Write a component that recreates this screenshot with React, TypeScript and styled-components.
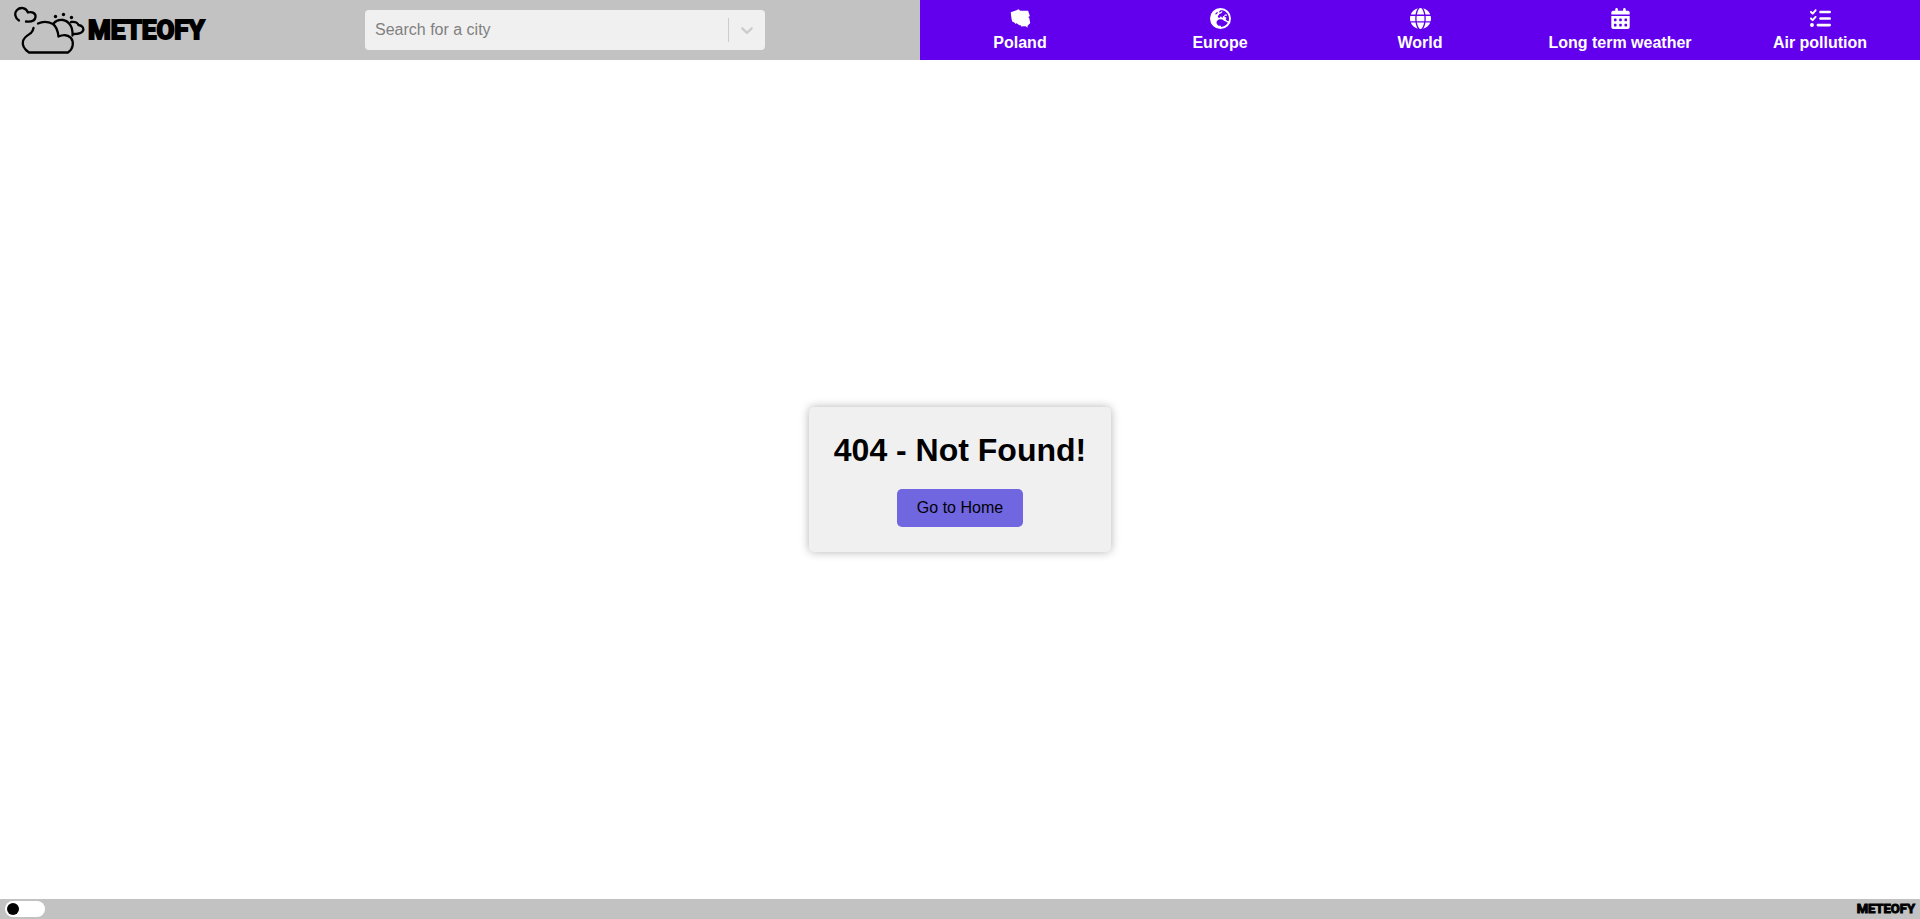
import React from "react";
import styled, { createGlobalStyle } from "styled-components";
import { GiPoland } from "react-icons/gi";
import { FaCalendarDays, FaEarthEurope, FaGlobe, FaListCheck } from "react-icons/fa6";

const GlobalStyle = createGlobalStyle`
  *, *::before, *::after { box-sizing: border-box; }
  body {
    margin: 0;
    font-family: "Liberation Sans", Arial, sans-serif;
    font-size: 16px;
    color: #000;
    background: #fff;
  }
`;

const Page = styled.div`
  display: flex;
  flex-direction: column;
  min-height: 100vh;
`;

const Header = styled.header`
  display: flex;
  height: 60px;
  background: #c2c2c2;
`;

const Brand = styled.a`
  display: flex;
  align-items: center;
  flex: none;
  width: 210px;
  padding-left: 12px;
  color: #000;
  text-decoration: none;
`;

const Wordmark = styled.span<{ $small?: boolean }>`
  font-family: Roboto, "Liberation Sans", sans-serif;
  font-weight: 700;
  font-size: ${(p) => (p.$small ? 13 : 26)}px;
  line-height: ${(p) => (p.$small ? 20 : 60)}px;
  -webkit-text-stroke: ${(p) => (p.$small ? 1 : 2)}px #000;
`;

const CloudArt = styled.svg`
  flex: none;
  width: 76px;
  height: 60px;
`;

const SearchArea = styled.div`
  display: flex;
  flex: 1;
  align-items: center;
  justify-content: center;
`;

const Combo = styled.label`
  display: flex;
  align-items: center;
  width: 400px;
  height: 40px;
  border-radius: 4px;
  background: #f0f0f0;
`;

const ComboInput = styled.input`
  flex: 1;
  min-width: 0;
  height: 40px;
  padding: 0 10px;
  border: 0;
  outline: 0;
  background: transparent;
  font: inherit;
  &::placeholder { color: #808080; opacity: 1; }
`;

const ComboToggle = styled.button`
  display: flex;
  align-items: center;
  justify-content: center;
  width: 37px;
  height: 24px;
  padding: 0;
  border: 0;
  border-left: 1px solid #ccc;
  background: transparent;
  color: #ccc;
`;

const Nav = styled.nav`
  display: flex;
  flex: none;
  background: #6200ee;
`;

const NavLink = styled.a`
  display: flex;
  flex-direction: column;
  align-items: center;
  justify-content: center;
  gap: 5px;
  width: 200px;
  color: #fff;
  font-weight: 700;
  line-height: 18px;
  text-decoration: none;
`;

const Main = styled.main`
  display: flex;
  flex: 1;
  align-items: center;
  justify-content: center;
`;

const Card = styled.section`
  display: flex;
  flex-direction: column;
  align-items: center;
  gap: 20px;
  padding: 25px;
  border-radius: 5px;
  background: #f0f0f0;
  box-shadow: 0 0 10px rgba(0, 0, 0, 0.3);
`;

const Title = styled.h1`
  margin: 0;
  font-size: 32px;
  line-height: 37px;
`;

const HomeLink = styled.a`
  padding: 10px 20px;
  border-radius: 5px;
  background: #7066e0;
  color: #000;
  line-height: 18px;
  text-decoration: none;
`;

const Footer = styled.footer`
  display: flex;
  align-items: center;
  justify-content: space-between;
  height: 20px;
  padding: 0 5px;
  background: #c2c2c2;
`;

const Switch = styled.input`
  display: flex;
  align-items: center;
  appearance: none;
  width: 40px;
  height: 16px;
  margin: 0;
  padding: 0 2px;
  border-radius: 8px;
  background: #fff;
  &::before {
    content: "";
    width: 12px;
    height: 12px;
    border-radius: 50%;
    background: #000;
  }
  &:checked { justify-content: flex-end; }
`;

const links = [
  { label: "Poland", Icon: GiPoland },
  { label: "Europe", Icon: FaEarthEurope },
  { label: "World", Icon: FaGlobe },
  { label: "Long term weather", Icon: FaCalendarDays },
  { label: "Air pollution", Icon: FaListCheck },
];

export default function App() {
  return (
    <Page>
      <GlobalStyle />
      <Header>
        <Brand href="#home">
          <CloudArt viewBox="12 0 76 60" fill="none" stroke="#000" strokeWidth="2.3" strokeLinecap="round" strokeLinejoin="round" aria-hidden="true">
            <path d="M19 20.500C15 18 14 13 17 10C20 7 26 7 28 12.500C32 11.500 36 13 35.500 17C35 21 31 22 26 21.500" />
            <path d="M38 23.500C43 21 49 22 53 24C57 27 58 32 58.500 36.500C63 34.500 68 35 71 38C74 42 73.500 49 68 52.500H29C24 49 22 45 23 41C24 37 28 35 31 33Q33 31 33.500 28" />
            <path d="M54 23C56 20.500 60 19.500 63 20C69 21 73 27 72.500 35.500" />
            <path d="M71 22C75 21.500 77.500 22.500 78.500 25C83 25.500 84.500 29 82.500 31.500C80.500 34 77 34 73.500 34" />
            <g fill="#000" stroke="none">
              <circle cx="55.500" cy="16.500" r="1.700" />
              <circle cx="63.500" cy="14.500" r="1.700" />
              <circle cx="71.500" cy="17.500" r="1.700" />
            </g>
          </CloudArt>
          <Wordmark>METEOFY</Wordmark>
        </Brand>
        <SearchArea>
          <Combo>
            <ComboInput placeholder="Search for a city" aria-label="Search for a city" />
            <ComboToggle type="button" aria-label="Show cities">
              <svg width="20" height="20" viewBox="0 0 20 20" fill="currentColor" aria-hidden="true">
                <path d="M4.516 7.548c0.436-0.446 1.043-0.481 1.576 0l3.908 3.747 3.908-3.747c0.533-0.481 1.141-0.446 1.574 0 0.436 0.445 0.408 1.197 0 1.615-0.406 0.418-4.695 4.502-4.695 4.502-0.217 0.223-0.502 0.335-0.787 0.335s-0.570-0.112-0.789-0.335c0 0-4.287-4.084-4.695-4.502s-0.436-1.170 0-1.615z" />
              </svg>
            </ComboToggle>
          </Combo>
        </SearchArea>
        <Nav>
          {links.map(({ label, Icon }) => (
            <NavLink href="#" key={label}>
              <Icon size={21} aria-hidden="true" />
              {label}
            </NavLink>
          ))}
        </Nav>
      </Header>
      <Main>
        <Card>
          <Title>404 - Not Found!</Title>
          <HomeLink href="#home">Go to Home</HomeLink>
        </Card>
      </Main>
      <Footer>
        <Switch type="checkbox" role="switch" aria-label="Dark mode" />
        <Wordmark $small>METEOFY</Wordmark>
      </Footer>
    </Page>
  );
}
